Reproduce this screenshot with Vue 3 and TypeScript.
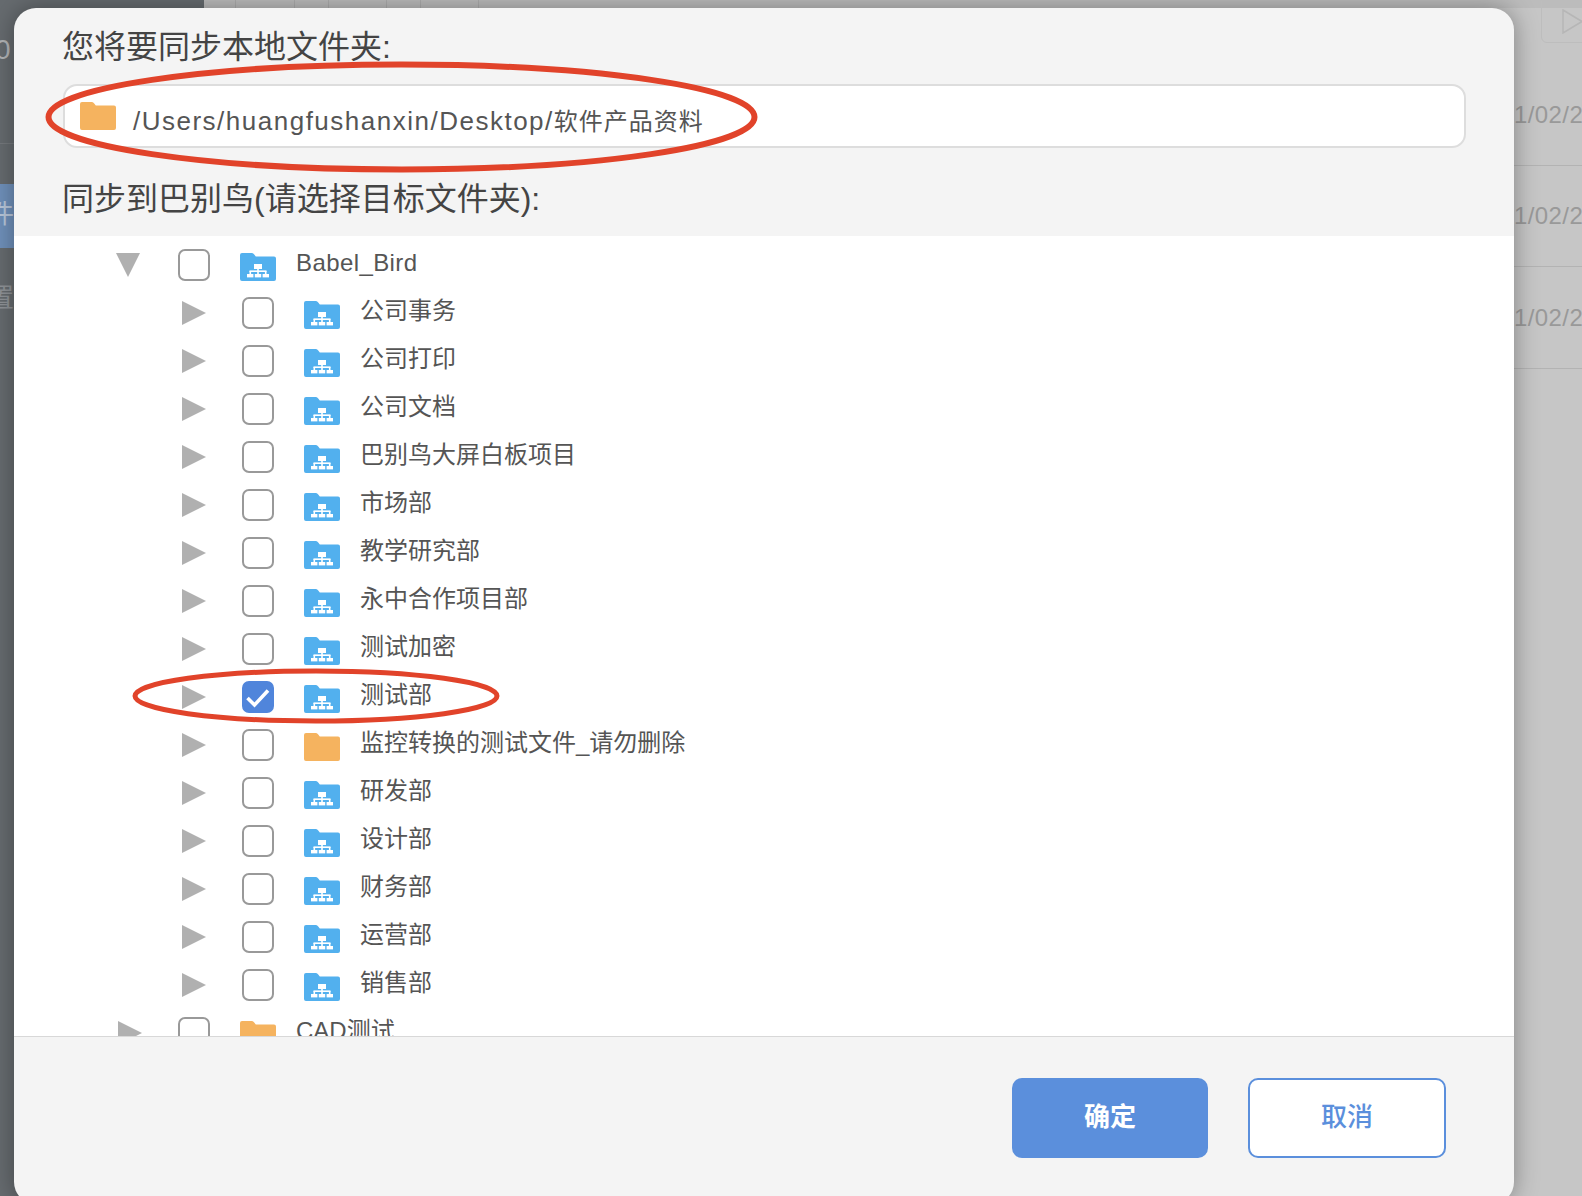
<script setup lang="ts">
interface Row { name: string; level: number; open?: boolean; checked?: boolean; org: boolean }
const children = ['公司事务','公司打印','公司文档','巴别鸟大屏白板项目','市场部','教学研究部','永中合作项目部','测试加密','测试部','监控转换的测试文件_请勿删除','研发部','设计部','财务部','运营部','销售部']
const rows: Row[] = [
  { name: 'Babel_Bird', level: 0, open: true, org: true },
  ...children.map((name): Row => ({ name, level: 1, checked: name === '测试部', org: name !== '监控转换的测试文件_请勿删除' })),
  { name: 'CAD测试', level: 0, org: false },
]
const dates = ['1/02/2', '1/02/2', '1/02/2']
const ticks = [32, 59, 34, 58, 34, 58]
</script>

<template>
  <div class="stage">
    <div class="backdrop">
      <aside class="side">
        <div class="side-o">0</div>
        <div class="side-line"></div>
        <div class="side-active">件</div>
        <div class="side-item">置</div>
      </aside>
      <main class="main">
        <div class="tabs">
          <div class="strip">
            <span v-for="(w, i) in ticks" :key="i" class="tick" :style="{ width: w + 'px' }"></span>
          </div>
          <div class="play">
            <svg width="22" height="25" viewBox="0 0 22 25"><path d="M1 1 L20 12.5 L1 24 Z" fill="none" stroke="#b6b6b6" stroke-width="1.5"/></svg>
          </div>
        </div>
        <div class="list">
          <div v-for="(d, i) in dates" :key="i" class="list-row">{{ d }}</div>
        </div>
      </main>
    </div>

    <section class="dialog">
      <header class="head">
        <h2 class="title">您将要同步本地文件夹:</h2>
        <div class="path">
          <svg class="folder" viewBox="0 0 36 28"><path d="M2 0H11.5Q13 0 14 1.2L15.8 3.5H34a2 2 0 0 1 2 2V26a2 2 0 0 1-2 2H2a2 2 0 0 1-2-2V2a2 2 0 0 1 2-2Z" fill="#f5b35f"/></svg>
          <span class="path-text">/Users/huangfushanxin/Desktop/<span class="path-cjk">软件产品资料</span></span>
        </div>
        <h2 class="title second">同步到巴别鸟(请选择目标文件夹):</h2>
      </header>
      <div class="tree">
        <div v-for="r in rows" :key="r.name" class="row" :class="{ child: r.level === 1 }">
          <span class="arrow-box">
            <svg v-if="r.open" class="arrow down" viewBox="0 0 24 24"><path d="M0 0H24L12 24Z" fill="#b0b0b0"/></svg>
            <svg v-else class="arrow" viewBox="0 0 24 24"><path d="M0 0L24 12L0 24Z" fill="#b0b0b0"/></svg>
          </span>
          <span class="check" :class="{ on: r.checked }">
            <svg v-if="r.checked" class="tick-mark" viewBox="0 0 32 32"><path d="M5.5 17L12.5 24L26 9.5" fill="none" stroke="#fff" stroke-width="3.6"/></svg>
          </span>
          <svg class="folder" viewBox="0 0 36 28">
            <path d="M2 0H11.5Q13 0 14 1.2L15.8 3.5H34a2 2 0 0 1 2 2V26a2 2 0 0 1-2 2H2a2 2 0 0 1-2-2V2a2 2 0 0 1 2-2Z" :fill="r.org ? '#52b0ee' : '#f5b35f'"/>
            <g v-if="r.org" fill="#fff">
              <rect x="14" y="11" width="8" height="5"/>
              <rect x="17.2" y="16" width="1.6" height="2"/>
              <rect x="9.5" y="17.4" width="17" height="1.6"/>
              <rect x="9.5" y="18" width="1.6" height="3"/>
              <rect x="17.2" y="18" width="1.6" height="3"/>
              <rect x="24.9" y="18" width="1.6" height="3"/>
              <rect x="7" y="21" width="6.4" height="3.4"/>
              <rect x="14.8" y="21" width="6.4" height="3.4"/>
              <rect x="22.6" y="21" width="6.4" height="3.4"/>
            </g>
          </svg>
          <span class="label" :class="{ wide: r.name === 'Babel_Bird' }">{{ r.name }}</span>
        </div>
      </div>
      <footer class="foot">
        <button class="btn primary" type="button">确定</button>
        <button class="btn ghost" type="button">取消</button>
      </footer>
    </section>

    <svg class="marks" width="1582" height="1196" viewBox="0 0 1582 1196">
      <ellipse cx="401.5" cy="117" rx="353" ry="52.5" fill="none" stroke="#e1432a" stroke-width="6"/>
      <ellipse cx="316" cy="696" rx="181" ry="25" fill="none" stroke="#e1432a" stroke-width="5"/>
    </svg>
  </div>
</template>

<style>
html, body { margin: 0; overflow: hidden; }
</style>

<style scoped>
.stage {
  position: relative;
  width: 1582px;
  height: 1196px;
  overflow: hidden;
  font-family: "Liberation Sans", "Noto Sans CJK SC", sans-serif;
}
.backdrop { display: flex; height: 100%; }
.side {
  width: 204px;
  flex: none;
  background: #666b6f;
  color: #8f9397;
  font-size: 24px;
}
.side-o { box-sizing: border-box; height: 143px; padding-top: 36px; line-height: 28px; margin-left: -5px; color: #b2b4b6; font-size: 28px; }
.side-line { height: 1px; background: #75797d; }
.side-active { margin-top: 40px; height: 64px; line-height: 60px; background: #6f90ba; margin-left: -12px; color: #b9c7da; font-size: 26px; }
.side-item { margin-top: 36px; margin-left: -12px; line-height: 28px; font-size: 26px; }
.main { flex: 1; background: #c6c6c6; min-width: 0; }
.tabs { height: 43px; position: relative; }
.strip { height: 8px; display: flex; background: #bcbcbc; }
.tick { height: 8px; border-right: 1px solid #adadad; box-sizing: border-box; flex: none; }
.play {
  position: absolute;
  left: 1337px;
  top: -4px;
  width: 50px;
  height: 47px;
  box-sizing: border-box;
  border: 1px solid #bdbdbd;
  border-radius: 6px;
  padding: 12px 0 0 20px;
}
.list { padding-top: 21px; }
.list-row {
  height: 101.5px;
  box-sizing: border-box;
  border-bottom: 1px solid #b3b3b3;
  padding-left: 1310px;
  padding-top: 36.5px;
  font-size: 24px;
  letter-spacing: 0.4px;
  line-height: 28px;
  color: #999;
  white-space: nowrap;
  overflow: hidden;
}
.dialog {
  position: absolute;
  left: 14px;
  top: 8px;
  width: 1500px;
  height: 1196px;
  border-radius: 22px;
  background: #f4f4f4;
  box-shadow: 0 0 24px rgba(0, 0, 0, 0.35);
  display: flex;
  flex-direction: column;
  overflow: hidden;
}
.head { padding: 15px 49px 13px; }
.title {
  margin: 0 0 0 -1px;
  font-size: 32px;
  line-height: 48px;
  font-weight: 400;
  color: #444;
  padding-bottom: 13px;
}
.title.second { padding: 0; margin-top: 27px; }
.path {
  height: 64px;
  width: 1403px;
  box-sizing: border-box;
  border: 2px solid #ddd;
  border-radius: 14px;
  background: #fff;
  display: flex;
  align-items: center;
  padding-left: 15px;
}
.path .folder { margin: 0 18px 0 0; }
.path-text { font-size: 26px; letter-spacing: 1.5px; color: #555; line-height: 34px; margin: 10px 0 0 -1px; white-space: nowrap; }
.path-cjk { font-size: 24px; letter-spacing: 1px; }
.folder { width: 36px; height: 28px; flex: none; }
.tree {
  height: 800px;
  flex: none;
  box-sizing: border-box;
  padding-top: 5px;
  background: #fff;
  overflow: hidden;
}
.row { height: 48px; display: flex; align-items: center; padding-left: 104px; }
.row.child { padding-left: 168px; }
.arrow-box { width: 60px; flex: none; display: flex; }
.arrow { width: 24px; height: 24px; display: block; }
.arrow.down { margin-left: -2px; }
.check {
  width: 32px;
  height: 32px;
  flex: none;
  box-sizing: border-box;
  border: 2px solid #999;
  border-radius: 7px;
  background: #fff;
  margin-right: 30px;
  position: relative;
}
.check.on { background: #5085db; border-color: #5085db; }
.tick-mark { position: absolute; left: -2px; top: -2px; width: 32px; height: 32px; }
.row .folder { margin-top: 4px; }
.label { font-size: 24px; line-height: 32px; color: #555; margin-left: 20px; margin-top: -5px; white-space: nowrap; }
.label.wide { letter-spacing: 0.4px; }
.foot {
  border-top: 1px solid #d8d8d8;
  flex: 1;
  display: flex;
  gap: 40px;
  padding: 41px 0 0 998px;
  align-items: flex-start;
}
.btn {
  height: 80px;
  box-sizing: border-box;
  border-radius: 10px;
  font: inherit;
  font-size: 26px;
  padding: 0 0 7px;
}
.primary { width: 196px; background: #5b8fdc; border: 0; color: #fff; font-weight: 700; }
.ghost { width: 198px; background: #fff; border: 2px solid #5b8fdc; color: #5b8fdc; font-weight: 500; }
.marks { position: absolute; left: 0; top: 0; pointer-events: none; }
</style>
